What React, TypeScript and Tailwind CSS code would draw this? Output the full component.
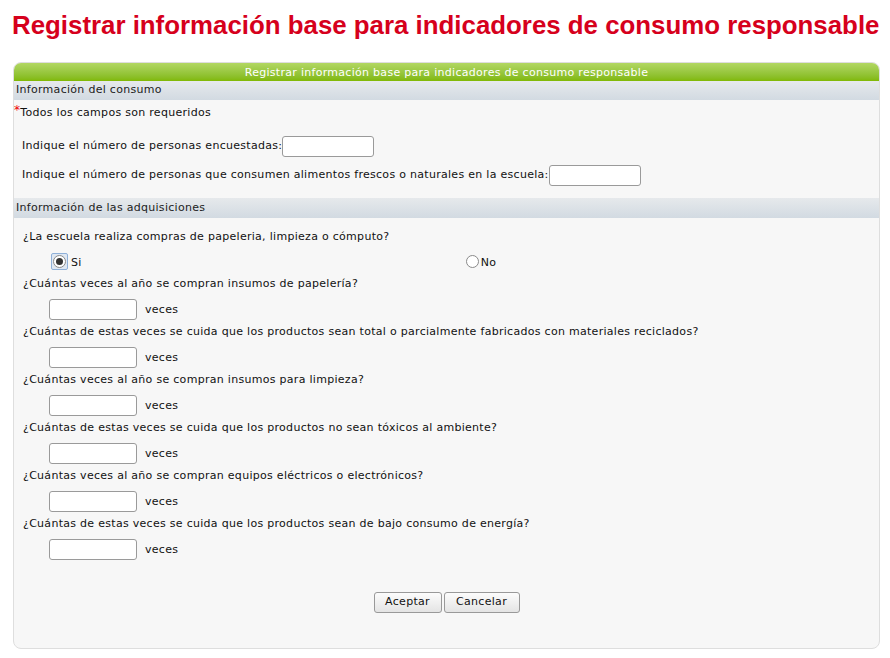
import React from "react";

const preguntas = [
  "¿Cuántas veces al año se compran insumos de papelería?",
  "¿Cuántas de estas veces se cuida que los productos sean total o parcialmente fabricados con materiales reciclados?",
  "¿Cuántas veces al año se compran insumos para limpieza?",
  "¿Cuántas de estas veces se cuida que los productos no sean tóxicos al ambiente?",
  "¿Cuántas veces al año se compran equipos eléctricos o electrónicos?",
  "¿Cuántas de estas veces se cuida que los productos sean de bajo consumo de energía?",
];

const Campo = ({ className = "" }: { className?: string }) => (
  <input
    type="text"
    className={`h-[21px] rounded-[3px] border border-[#9a9a9a] bg-white outline-none ${className}`}
  />
);

const Radio = ({ checked }: { checked?: boolean }) => (
  <span className="flex h-[13px] w-[13px] items-center justify-center rounded-full border border-[#8a8a8a] bg-white">
    {checked && <span className="h-[7px] w-[7px] rounded-full bg-[#333]" />}
  </span>
);

const Seccion = ({ children, className = "" }: { children: React.ReactNode; className?: string }) => (
  <div className={`flex items-center bg-gradient-to-b from-[#e6e9ec] to-[#d2dae2] pl-[2px] text-[#222] ${className}`}>
    {children}
  </div>
);

const Boton = ({ children, className = "" }: { children: React.ReactNode; className?: string }) => (
  <button
    className={`h-[21px] rounded-[3px] border border-[#999] bg-gradient-to-b from-[#fcfcfc] to-[#e4e4e4] text-[11px] tracking-[0.3px] text-[#111] ${className}`}
  >
    {children}
  </button>
);

export default function App() {
  return (
    <div className="min-h-[658px] w-[890px] bg-white font-['DejaVu_Sans',sans-serif] text-[#111]">
      <h1 className="pl-[12px] pt-[8px] font-['Liberation_Sans',Arial,sans-serif] text-[25.85px] font-bold leading-[34px] text-[#d6001c]">
        Registrar información base para indicadores de consumo responsable
      </h1>

      <div className="ml-[13px] mt-[20px] w-[867px] overflow-hidden rounded-[8px] border border-[#dedede] bg-[#f7f7f7] text-[11px] tracking-[0.29px]">
        <div className="flex h-[18px] items-center justify-center bg-gradient-to-b from-[#b2d762] to-[#80b800] leading-none text-white">
          Registrar información base para indicadores de consumo responsable
        </div>

        <Seccion className="h-[19px]">Información del consumo</Seccion>
        <div className="flex h-[26px] items-center">
          <span className="-mt-[6px] text-[12px] text-[#e00]">*</span>
          <span>Todos los campos son requeridos</span>
        </div>

        <div className="flex flex-col gap-[8px] pl-[8px] pt-[10px]">
          <div className="flex items-center">
            <span>Indique el número de personas encuestadas:</span>
            <Campo className="w-[92px]" />
          </div>
          <div className="flex items-center">
            <span>Indique el número de personas que consumen alimentos frescos o naturales en la escuela:</span>
            <Campo className="w-[92px]" />
          </div>
        </div>

        <Seccion className="mt-[12px] h-[20px]">Información de las adquisiciones</Seccion>

        <div className="pl-[9px] pt-[11px]">
          <div className="leading-[15px]">¿La escuela realiza compras de papeleria, limpieza o cómputo?</div>
          <div className="mb-[2px] mt-[9px] flex h-[17px] items-center">
            <span className="ml-[28px] flex h-[17px] w-[17px] items-center justify-center rounded-[2px] border border-[#8fb0d8] bg-[#dfe8f3]">
              <Radio checked />
            </span>
            <span className="ml-[3px] mt-[4px]">Si</span>
            <span className="ml-[384px]">
              <Radio />
            </span>
            <span className="ml-[2px] mt-[4px]">No</span>
          </div>

          {preguntas.map((p) => (
            <div key={p} className="pt-[4px]">
              <div className="leading-[15px]">{p}</div>
              <div className="mt-[8px] flex items-center">
                <Campo className="ml-[26px] w-[88px]" />
                <span className="ml-[8px] mt-[2px]">veces</span>
              </div>
            </div>
          ))}

          <div className="mt-[32px] flex justify-center gap-[2px] pr-[9px]">
            <Boton className="w-[68px]">Aceptar</Boton>
            <Boton className="w-[76px]">Cancelar</Boton>
          </div>
          <div className="h-[35px]" />
        </div>
      </div>
    </div>
  );
}
